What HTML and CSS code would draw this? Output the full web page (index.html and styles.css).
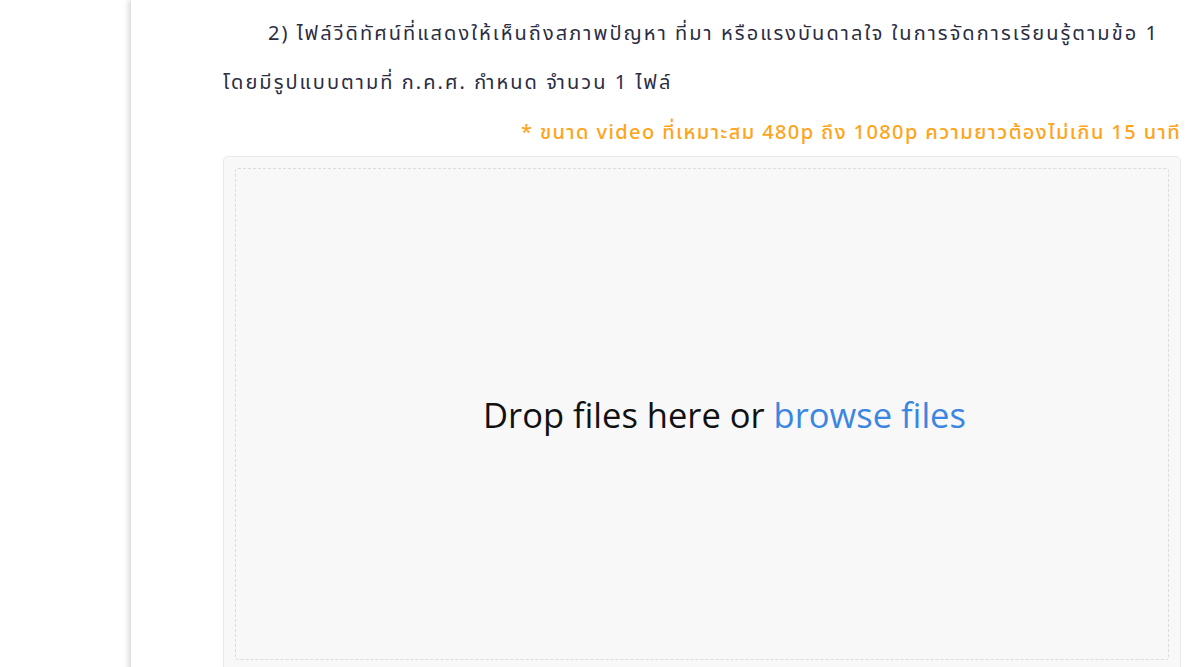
FILE: index.html
```html
<!DOCTYPE html>
<html lang="th">
<head>
  <meta charset="UTF-8" />
  <meta name="viewport" content="width=device-width, initial-scale=1.0"/>
  <title>อัปโหลดไฟล์วีดิทัศน์</title>
  <link rel="stylesheet" href="styles.css">
</head>
<body>
  <div class="sheet">
    <p class="item">2) ไฟล์วีดิทัศน์ที่แสดงให้เห็นถึงสภาพปัญหา ที่มา หรือแรงบันดาลใจ ในการจัดการเรียนรู้ตามข้อ 1<br>โดยมีรูปแบบตามที่ ก.ค.ศ. กำหนด จำนวน 1 ไฟล์</p>
    <p class="note">* ขนาด video ที่เหมาะสม 480p ถึง 1080p ความยาวต้องไม่เกิน 15 นาที</p>

    <div class="dropzone">
      <div class="drop-inner">
        <div class="drop-title">Drop files here or <span class="browse">browse files</span></div>
      </div>
    </div>
  </div>
</body>
</html>
```

FILE: styles.css
```css
body {
  margin: 0;
  background-color: #ffffff;
  font-family: "Noto Sans", "Noto Sans Thai", sans-serif;
}
.sheet {
  margin-left: 131px;
  padding: 0 4px 0 92px;
  min-height: 700px;
  background-color: #ffffff;
  box-shadow: -3px 0 5px rgba(0, 0, 0, 0.14);
}
.item {
  margin: 0;
  padding-top: 8px;
  text-indent: 45px;
  font-size: 20px;
  letter-spacing: 2.05px;
  line-height: 49px;
  color: #2b2d42;
  white-space: nowrap;
}
.note {
  margin: 11px 0 0;
  text-align: right;
  font-size: 20px;
  letter-spacing: 1.4px;
  line-height: 30px;
  font-weight: 500;
  color: #ffa41b;
}
.dropzone {
  margin-top: 9px;
  padding: 11px;
  height: 500px;
  background-color: #f8f8f8;
  border: 1px solid #eaeaea;
  border-radius: 5px;
}
.drop-inner {
  height: 490px;
  display: flex;
  align-items: center;
  justify-content: center;
  padding-left: 45px;
  border: 1px dashed #dcdcdc;
  border-radius: 3px;
}
.drop-title {
  font-family: "Open Sans", sans-serif;
  font-size: 34.5px;
  color: #111111;
}
.browse {
  color: #3b86e0;
}
```
